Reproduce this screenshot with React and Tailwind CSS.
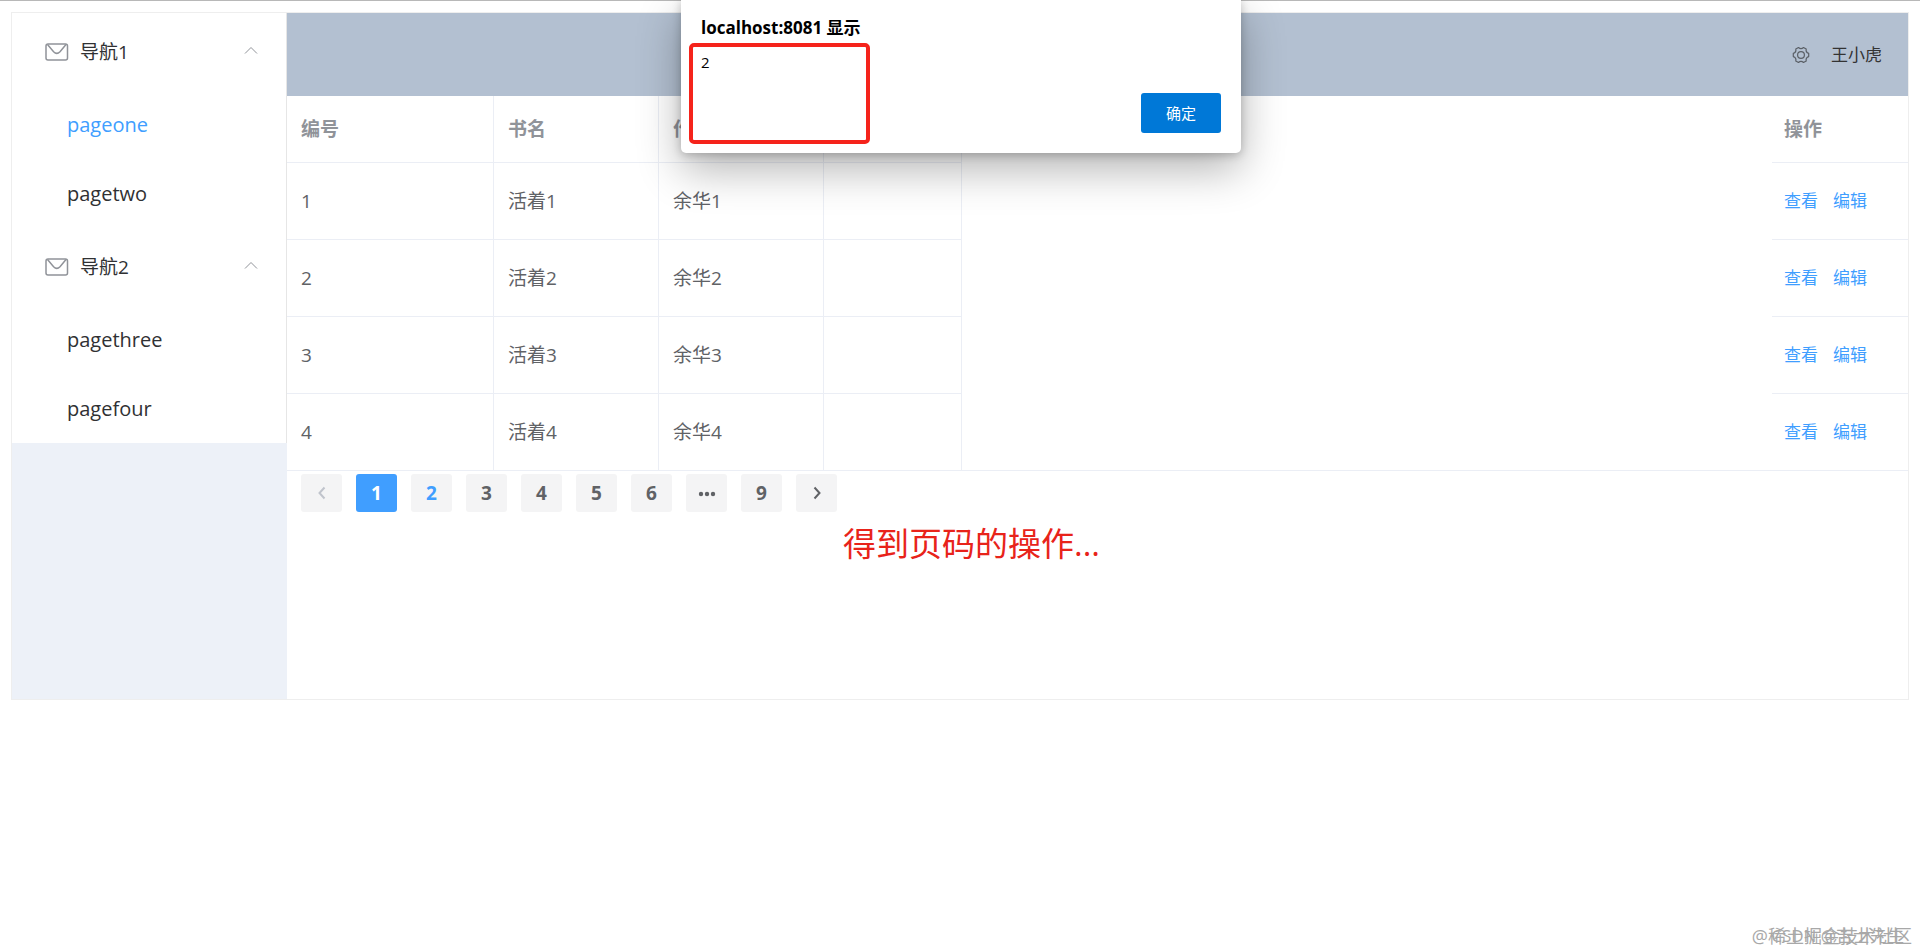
import React from "react";

const MENUS = [
  { title: "导航1", items: ["pageone", "pagetwo"] },
  { title: "导航2", items: ["pagethree", "pagefour"] },
];

const BOOKS = [
  { id: 1, name: "活着1", author: "余华1" },
  { id: 2, name: "活着2", author: "余华2" },
  { id: 3, name: "活着3", author: "余华3" },
  { id: 4, name: "活着4", author: "余华4" },
];

const PAGES = ["1", "2", "3", "4", "5", "6", "more", "9"];

function MailIcon() {
  return (
    <svg viewBox="0 0 24 18" className="w-6 h-[18px] text-[#909399]" fill="none" stroke="currentColor" strokeWidth="1.5">
      <rect x="1" y="1" width="21.5" height="16" rx="2" />
      <path d="M2.5 1.5 L8.6 8.8 Q11.8 12 15 8.8 L21 1.5" />
    </svg>
  );
}

function GearIcon() {
  return (
    <svg viewBox="0 0 18 18" className="size-[18px] text-[#5a5f66]" fill="none" stroke="currentColor" strokeWidth="1.2" strokeLinejoin="round">
      <path d="M6.5 1.5 Q9 3.8 11.5 1.5 L14.2 3 Q13.5 6.35 16.7 7.4 V10.6 Q13.5 11.65 14.2 15 L11.5 16.5 Q9 14.2 6.5 16.5 L3.8 15 Q4.5 11.65 1.3 10.6 V7.4 Q4.5 6.35 3.8 3 Z" />
      <circle cx="9" cy="9" r="3.4" />
    </svg>
  );
}

function Chevron({ d, className }) {
  return (
    <svg viewBox="0 0 16 16" className={className} fill="none" stroke="currentColor">
      <path d={d} />
    </svg>
  );
}

function SideMenu() {
  return (
    <nav className="bg-white border-r border-[#e6e6e6]">
      {MENUS.map((menu) => (
        <div key={menu.title}>
          <button className="w-full h-[77px] flex items-center pl-[33px] pr-[27px] text-[#303133]">
            <MailIcon />
            <span className="ml-[11px] pt-px">{menu.title}</span>
            <Chevron d="M2 9.5 L8 3.5 L14 9.5" className="ml-auto size-4 text-[#909399]" />
          </button>
          {menu.items.map((item) => (
            <a
              key={item}
              href={"#" + item}
              className={
                "flex items-center h-[69px] pl-[55px] text-[20px] " +
                (item === "pageone" ? "text-[#409eff]" : "text-[#303133]")
              }
            >
              {item}
            </a>
          ))}
        </div>
      ))}
    </nav>
  );
}

function BookTable() {
  return (
    <table className="w-full table-fixed border-separate border-spacing-0 text-left text-[#606266] bg-white">
      <colgroup>
        <col className="w-[207px]" />
        <col className="w-[165px]" />
        <col className="w-[165px]" />
        <col className="w-[138px]" />
        <col />
        <col className="w-[136px]" />
      </colgroup>
      <thead className="text-[#909399]">
        <tr className="h-[67px]">
          <th className="pl-[14px] border-b border-r border-[#ebeef5]">编号</th>
          <th className="pl-[14px] border-b border-r border-[#ebeef5]">书名</th>
          <th className="pl-[14px] border-b border-r border-[#ebeef5]">作者</th>
          <th className="border-b border-r border-[#ebeef5]" />
          <th />
          <th className="pl-3 border-b border-[#ebeef5]">操作</th>
        </tr>
      </thead>
      <tbody>
        {BOOKS.map((book) => (
          <tr key={book.id} className="h-[77px] group">
            <td className="pl-[14px] border-b border-r border-[#ebeef5]">{book.id}</td>
            <td className="pl-[14px] border-b border-r border-[#ebeef5]">{book.name}</td>
            <td className="pl-[14px] border-b border-r border-[#ebeef5]">{book.author}</td>
            <td className="border-b border-r border-[#ebeef5]" />
            <td className="group-last:border-b border-[#ebeef5]" />
            <td className="pl-3 border-b border-[#ebeef5] text-[17px] text-[#409eff]">
              <button className="mr-[15px]">查看</button>
              <button>编辑</button>
            </td>
          </tr>
        ))}
      </tbody>
    </table>
  );
}

function PageButton({ label, children, active, hover, disabled }) {
  let color = "bg-[#f4f4f5] text-[#606266]";
  if (active) color = "bg-[#409eff] text-white";
  if (hover) color = "bg-[#f4f4f5] text-[#409eff]";
  if (disabled) color = "bg-[#f4f4f5] text-[#c0c4cc]";
  return (
    <button
      aria-label={label}
      disabled={disabled}
      className={"w-[41px] h-[38px] flex items-center justify-center rounded-[3px] font-bold text-[19px] " + color}
    >
      {children}
    </button>
  );
}

function Pagination() {
  return (
    <div className="flex gap-[14px] px-[14px] pt-[3px]">
      <PageButton label="上一页" disabled>
        <Chevron d="M10.5 2.5 L5.5 8 L10.5 13.5" className="size-4 stroke-2" />
      </PageButton>
      {PAGES.map((page) => (
        <PageButton key={page} label={page} active={page === "1"} hover={page === "2"}>
          {page === "more" ? (
            <svg viewBox="0 0 18 6" className="w-[18px] h-[6px] mt-0.5" fill="currentColor">
              <circle cx="3" cy="3" r="2.2" />
              <circle cx="9" cy="3" r="2.2" />
              <circle cx="15" cy="3" r="2.2" />
            </svg>
          ) : (
            page
          )}
        </PageButton>
      ))}
      <PageButton label="下一页">
        <Chevron d="M5.5 2.5 L10.5 8 L5.5 13.5" className="size-4 stroke-2" />
      </PageButton>
    </div>
  );
}

function AlertDialog() {
  return (
    <div
      role="alertdialog"
      className="absolute -top-px left-1/2 -translate-x-1/2 ml-px w-[560px] h-[153px] px-5 pt-[17px] pb-5 flex flex-col bg-white text-black rounded-b-[5px] shadow-[0_16px_44px_rgba(0,0,0,0.3),0_2px_10px_rgba(0,0,0,0.22)]"
    >
      <h1 className="text-[17px] leading-[22px] font-bold">localhost:8081 显示</h1>
      <div className="-ml-3 mt-1 w-[181px] h-[101px] shrink-0 rounded-[5px] border-4 border-[#f5231b] px-2 py-1">
        <p className="text-[15px] leading-[22px]">2</p>
      </div>
      <button className="absolute right-5 bottom-5 w-20 h-10 rounded-[3px] bg-[#0078d7] text-white text-[15px]">
        确定
      </button>
    </div>
  );
}

export default function App() {
  return (
    <div className="relative min-h-screen bg-white border-t border-[#b8b8b8] px-[11px] pt-[11px] font-['Open_Sans','Noto_Sans_CJK_SC',sans-serif] text-[19px]">
      <div className="flex min-h-[688px] border border-[#eee]">
        <aside className="w-[275px] shrink-0 bg-[#edf1f8]">
          <SideMenu />
        </aside>
        <div className="flex-1 min-w-0">
          <header className="h-[83px] flex items-center justify-end gap-[21px] pr-[26px] bg-[#b3c0d1] text-[17px] text-[#333]">
            <button aria-label="设置">
              <GearIcon />
            </button>
            <span>王小虎</span>
          </header>
          <main>
            <BookTable />
            <Pagination />
            <p className="mt-2 pl-[556px] text-[33px] leading-[48px] text-[#e8231a]">得到页码的操作...</p>
          </main>
        </div>
      </div>

      <AlertDialog />

      {/* two watermarks, one stamped over the other */}
      <div className="absolute right-2 bottom-1 text-[18px] leading-6 text-[#a8a8a8]">@稀土掘金技术社区</div>
      <div className="absolute right-4 bottom-1 text-[17px] leading-6 text-[#a8a8a8]">CSDN @吉士先生</div>
    </div>
  );
}
